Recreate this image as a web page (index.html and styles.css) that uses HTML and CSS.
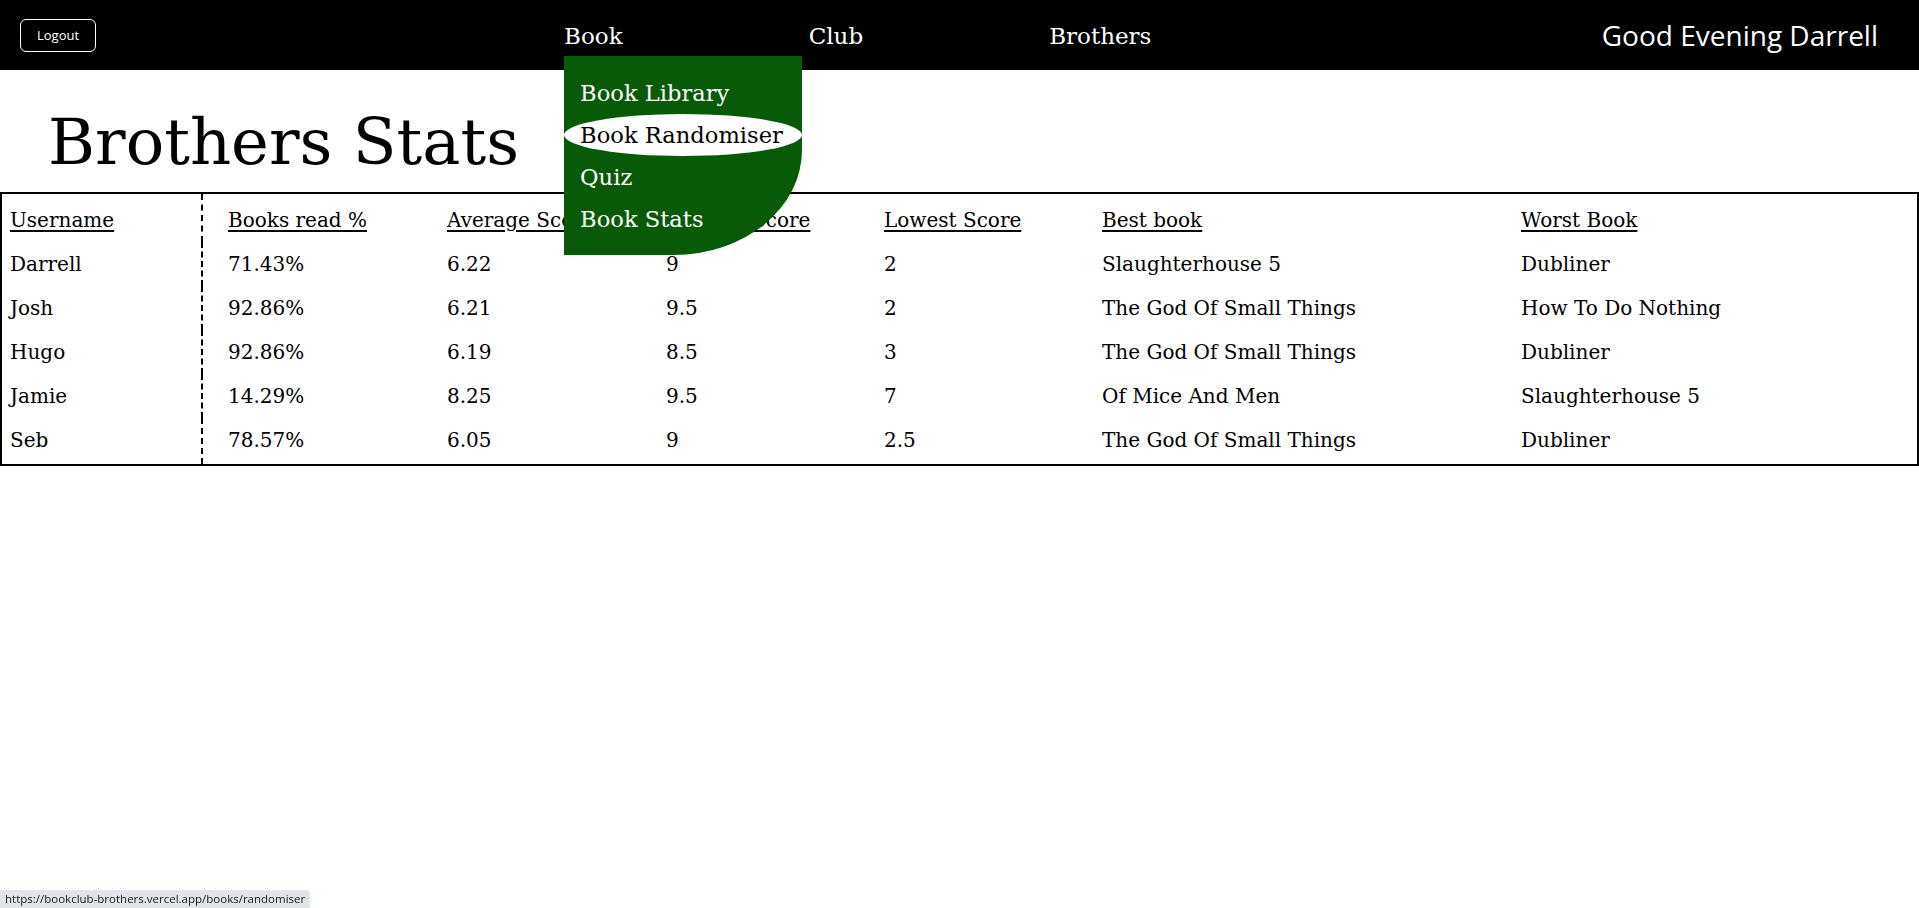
FILE: index.html
```html
<!DOCTYPE html>
<html lang="en">
<head>
<meta charset="utf-8">
<title>Brothers Stats</title>
<link rel="stylesheet" href="styles.css">
</head>
<body>
<header class="topbar">
  <button class="logout" type="button">Logout</button>
  <nav class="mainnav">
    <ul class="navlist">
      <li class="navitem navitem--open">Book
        <ul class="dropdown">
          <li class="dropitem">Book Library</li>
          <li class="dropitem dropitem--hover">Book Randomiser</li>
          <li class="dropitem">Quiz</li>
          <li class="dropitem">Book Stats</li>
        </ul>
      </li>
      <li class="navitem">Club</li>
      <li class="navitem">Brothers</li>
    </ul>
  </nav>
  <div class="greeting">Good Evening Darrell</div>
</header>
<main class="content">
  <h1 class="title">Brothers Stats</h1>
  <table class="stats">
    <colgroup>
      <col class="c1"><col class="c2"><col class="c3"><col class="c4"><col class="c5"><col class="c6"><col class="c7">
    </colgroup>
    <thead>
      <tr class="firstrow">
        <th class="name">Username</th>
        <th class="second">Books read %</th>
        <th>Average Score</th>
        <th>Highest Score</th>
        <th>Lowest Score</th>
        <th>Best book</th>
        <th>Worst Book</th>
      </tr>
    </thead>
    <tbody>
      <tr><td class="name">Darrell</td><td class="second">71.43%</td><td>6.22</td><td>9</td><td>2</td><td>Slaughterhouse 5</td><td>Dubliner</td></tr>
      <tr><td class="name">Josh</td><td class="second">92.86%</td><td>6.21</td><td>9.5</td><td>2</td><td>The God Of Small Things</td><td>How To Do Nothing</td></tr>
      <tr><td class="name">Hugo</td><td class="second">92.86%</td><td>6.19</td><td>8.5</td><td>3</td><td>The God Of Small Things</td><td>Dubliner</td></tr>
      <tr><td class="name">Jamie</td><td class="second">14.29%</td><td>8.25</td><td>9.5</td><td>7</td><td>Of Mice And Men</td><td>Slaughterhouse 5</td></tr>
      <tr class="lastrow"><td class="name">Seb</td><td class="second">78.57%</td><td>6.05</td><td>9</td><td>2.5</td><td>The God Of Small Things</td><td>Dubliner</td></tr>
    </tbody>
  </table>
</main>
<div class="statusbar">https://bookclub-brothers.vercel.app/books/randomiser</div>
</body>
</html>
```

FILE: styles.css
```css
html, body {
  margin: 0;
  padding: 0;
  background: #ffffff;
}

body {
  font-family: "DejaVu Serif", "Liberation Serif", serif;
  color: #000000;
}

.topbar {
  height: 70px;
  background: #000000;
  display: flex;
  align-items: center;
  padding: 0 41px 0 20px;
  box-sizing: border-box;
  position: relative;
  z-index: 5;
}

.logout {
  height: 33px;
  padding: 0 16px;
  background: #000000;
  color: #ffffff;
  border: 1px solid #ffffff;
  border-radius: 6px;
  font-family: "Open Sans", "Noto Sans", sans-serif;
  font-size: 13px;
  line-height: 1;
  cursor: pointer;
}

.mainnav {
  margin-left: 468px;
  margin-top: 2px;
}

.navlist {
  list-style: none;
  margin: 0;
  padding: 0;
  display: flex;
  gap: 186px;
}

.navitem {
  position: relative;
  color: #ffffff;
  font-family: "DejaVu Serif", serif;
  font-size: 23px;
  line-height: 28px;
  white-space: nowrap;
}

.dropdown {
  position: absolute;
  left: 0;
  top: calc(100% + 6px);
  width: 238px;
  margin: 0;
  padding: 16px 0 15px;
  list-style: none;
  background: #085a08;
  border-radius: 0 0 128px 0 / 0 0 105px 0;
  box-sizing: border-box;
}

.dropitem {
  height: 42px;
  line-height: 42px;
  padding-left: 16px;
  font-size: 22.6px;
  color: #ffffff;
  white-space: nowrap;
}

.dropitem--hover {
  background: #ffffff;
  color: #000000;
  border-radius: 50%;
}

.greeting {
  margin-left: auto;
  color: #ffffff;
  font-family: "Open Sans", "Noto Sans", sans-serif;
  font-size: 28px;
  white-space: nowrap;
}

.title {
  margin: 34px 0 12px;
  padding-left: 48px;
  font-size: 64px;
  line-height: 76px;
  font-weight: normal;
}

.stats {
  width: 100%;
  border: 2px solid #000000;
  border-collapse: separate;
  border-spacing: 0;
  table-layout: fixed;
  font-size: 20px;
}

.c1 { width: 201px; }
.c2 { width: 236px; }
.c3 { width: 219px; }
.c4 { width: 218px; }
.c5 { width: 218px; }
.c6 { width: 419px; }

.stats th,
.stats td {
  padding: 0 0 0 8px;
  line-height: 44px;
  text-align: left;
  font-weight: normal;
  vertical-align: top;
  white-space: nowrap;
  overflow: hidden;
}

.stats th {
  text-decoration: underline;
  text-decoration-thickness: 2px;
  text-underline-offset: 3px;
}

.stats .name {
  border-right: 2px dashed #000000;
}

.stats .second {
  padding-left: 25px;
}

.stats .firstrow th {
  padding-top: 4px;
}

.stats .lastrow td {
  padding-bottom: 2px;
}

.statusbar {
  position: fixed;
  left: 0;
  bottom: 0;
  height: 18px;
  line-height: 18px;
  padding: 0 5px;
  background: #e1e4e8;
  color: #202124;
  font-family: "Open Sans", "Noto Sans", sans-serif;
  font-size: 11.5px;
  border-top-right-radius: 4px;
  white-space: nowrap;
}
```
